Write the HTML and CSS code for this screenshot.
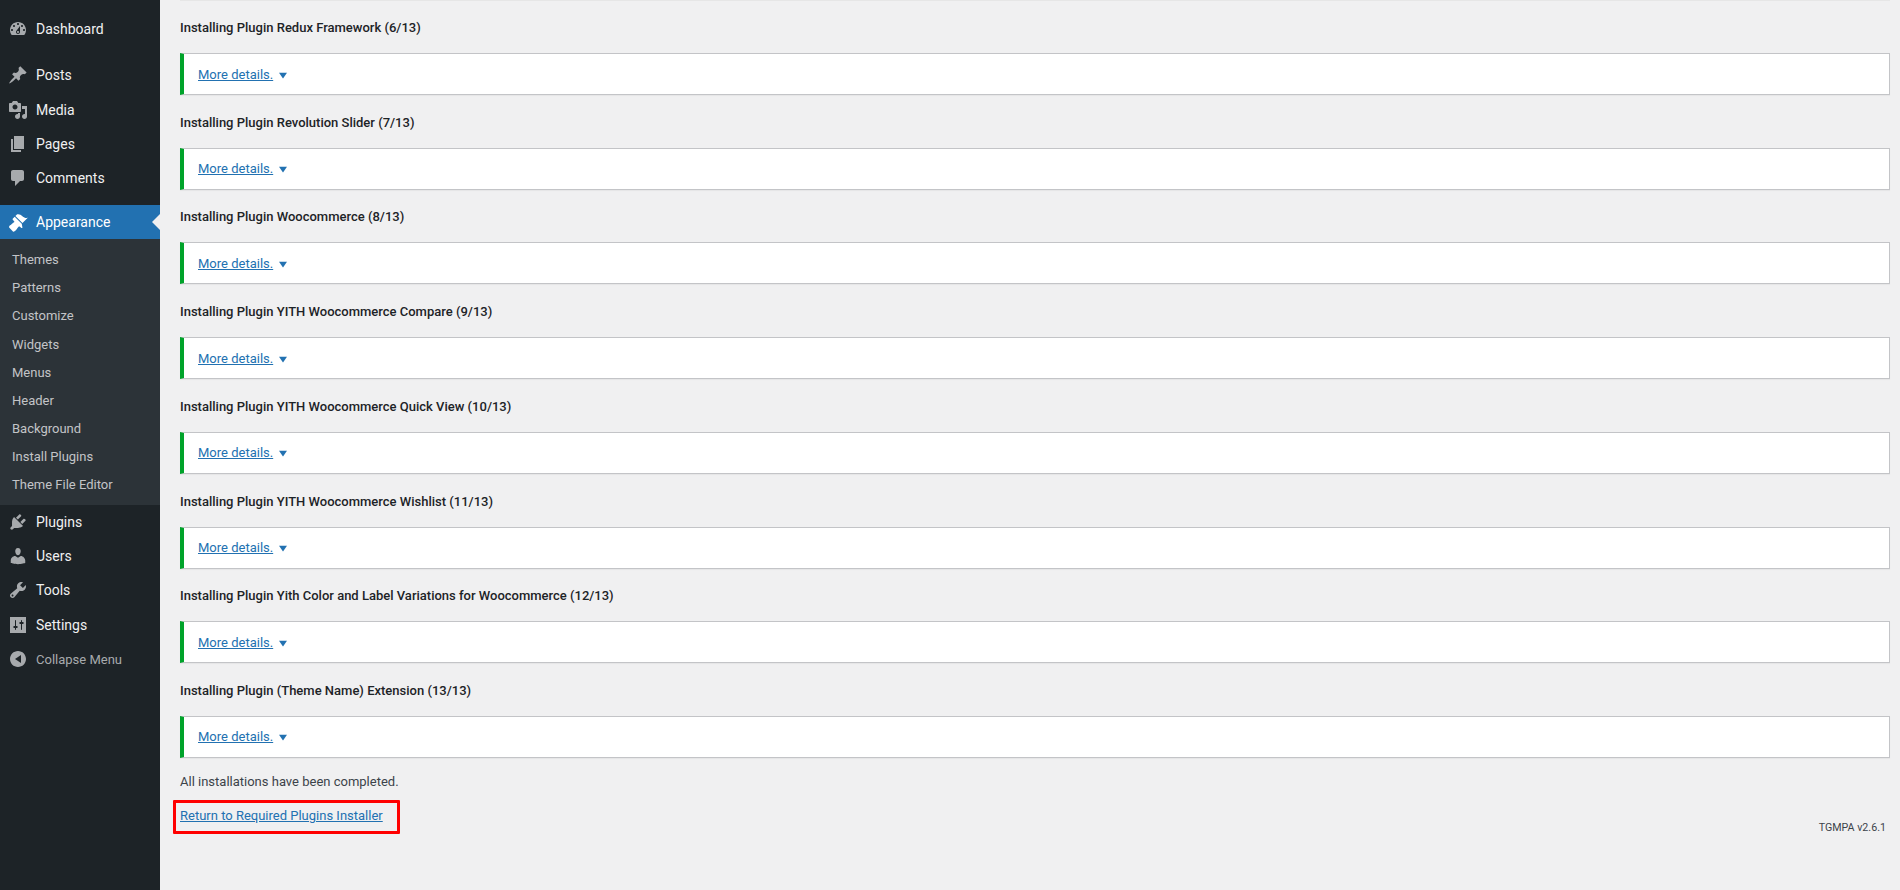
FILE: index.html
```html
<!DOCTYPE html>
<html lang="en">
<head>
<meta charset="utf-8">
<title>Install Plugins</title>
<link rel="stylesheet" href="styles.css">
</head>
<body>
<div class="layout">
  <nav class="sidebar">
    <ul class="menu group-first">
      <li class="item"><svg class="icon" viewBox="0 0 20 20"><path d="M3.76 16h12.48c1.1-1.37 1.76-3.11 1.76-5 0-4.42-3.58-8-8-8s-8 3.58-8 8c0 1.89.66 3.63 1.76 5zM10 4c.55 0 1 .45 1 1s-.45 1-1 1-1-.45-1-1 .45-1 1-1zM6 6c.55 0 1 .45 1 1s-.45 1-1 1-1-.45-1-1 .45-1 1-1zm8 0c.55 0 1 .45 1 1s-.45 1-1 1-1-.45-1-1 .45-1 1-1zm-5.37 5.55L12 7v6c0 1.1-.9 2-2 2s-2-.9-2-2c0-.57.24-1.08.63-1.45zM4 10c.55 0 1 .45 1 1s-.45 1-1 1-1-.45-1-1 .45-1 1-1zm12 0c.55 0 1 .45 1 1s-.45 1-1 1-1-.45-1-1 .45-1 1-1zm-5 3c0-.55-.45-1-1-1s-1 .45-1 1 .45 1 1 1 1-.45 1-1z"/></svg>Dashboard</li>
    </ul>
    <ul class="menu group-content">
      <li class="item"><svg class="icon" viewBox="0 0 20 20"><path d="M10.44 3.02l1.82-1.82 6.36 6.35-1.83 1.82c-1.05-.68-2.48-.57-3.41.36l-.75.75c-.92.93-1.04 2.35-.35 3.41l-1.83 1.82-2.41-2.41-2.8 2.79c-.42.42-3.38 2.71-3.8 2.29s1.86-3.39 2.28-3.81l2.79-2.79L4.1 9.36l1.83-1.82c1.05.69 2.48.57 3.4-.36l.75-.75c.93-.92 1.05-2.35.36-3.41z"/></svg>Posts</li>
      <li class="item"><svg class="icon" viewBox="0 0 20 20"><path d="M13 11V4c0-.55-.45-1-1-1h-1.67L9 1H5L3.67 3H2c-.55 0-1 .45-1 1v7c0 .55.45 1 1 1h10c.55 0 1-.45 1-1zM7 4.5c1.38 0 2.5 1.12 2.5 2.5S8.38 9.5 7 9.5 4.5 8.38 4.5 7 5.62 4.5 7 4.5zM14 6h5v10.5c0 1.38-1.12 2.5-2.5 2.5S14 17.88 14 16.5s1.12-2.5 2.5-2.5c.17 0 .34.02.5.05V9h-3V6zm-4 8.05V13h2v3.5c0 1.38-1.12 2.5-2.5 2.5S7 17.88 7 16.5 8.12 14 9.5 14c.17 0 .34.02.5.05z"/></svg>Media</li>
      <li class="item"><svg class="icon" viewBox="0 0 20 20"><path d="M6 15V2h10v13H6zm-1 1h8v2H3V5h2v11z"/></svg>Pages</li>
      <li class="item"><svg class="icon" viewBox="0 0 20 20"><path d="M5 2h9c1.1 0 2 .9 2 2v7c0 1.1-.9 2-2 2h-2l-5 5v-5H5c-1.1 0-2-.9-2-2V4c0-1.1.9-2 2-2z"/></svg>Comments</li>
    </ul>
    <ul class="menu group-admin">
      <li class="item current"><svg class="icon" viewBox="0 0 20 20"><path d="M14.48 11.06L7.41 3.99l1.5-1.5c.5-.56 2.3-.47 3.51.32 1.21.8 1.43 1.28 2.91 2.1 1.18.64 2.45 1.26 4.45.85zm-.71.71L6.7 4.7 4.93 6.47c-.39.39-.39 1.02 0 1.41l1.06 1.06c.39.39.39 1.03 0 1.42-.6.6-1.43 1.11-2.21 1.69-.35.26-.7.53-1.01.84C1.43 13.23.5 14.95 1.4 15.85l3.53 3.54c.7.7 1.8-.23 3.1-1.47.31-.31.58-.66.84-1.01.58-.78 1.09-1.61 1.69-2.21.39-.39 1.03-.39 1.42 0l1.06 1.06c.39.39 1.02.39 1.41 0z"/></svg>Appearance</li>
      <li>
        <ul class="submenu">
          <li>Themes</li>
          <li>Patterns</li>
          <li>Customize</li>
          <li>Widgets</li>
          <li>Menus</li>
          <li>Header</li>
          <li>Background</li>
          <li>Install Plugins</li>
          <li>Theme File Editor</li>
        </ul>
      </li>
      <li class="item"><svg class="icon" viewBox="0 0 20 20"><path d="M13.11 4.36L9.87 7.6 8 5.73l3.24-3.24c.35-.34 1.05-.2 1.56.32.52.51.66 1.21.31 1.55zm-8 1.77l.91-1.12 9.01 9.01-1.19.84c-.71.71-2.63 1.16-3.82 1.16H6.14L4.9 17.26c-.59.59-1.54.59-2.12 0-.59-.58-.59-1.53 0-2.12l1.24-1.24v-3.88c0-1.13.4-3.19 1.09-3.89zm7.26 3.97l3.24-3.24c.34-.35 1.04-.21 1.55.31.52.51.66 1.21.31 1.55l-3.24 3.25z"/></svg>Plugins</li>
      <li class="item"><svg class="icon" viewBox="0 0 20 20"><path d="M10 9.25c-2.27 0-2.73-3.44-2.73-3.44C7 4.02 7.82 2 9.97 2c2.16 0 2.98 2.02 2.71 3.81 0 0-.41 3.44-2.68 3.44zm0 2.57L12.72 10c2.39 0 4.52 2.33 4.52 4.53v2.49s-3.65 1.13-7.24 1.13c-3.65 0-7.24-1.13-7.24-1.13v-2.49c0-2.25 1.94-4.48 4.47-4.48z"/></svg>Users</li>
      <li class="item"><svg class="icon" viewBox="0 0 20 20"><path d="M16.68 9.77c-1.34 1.34-3.3 1.67-4.95.99l-5.41 6.52c-.99.99-2.59.99-3.58 0s-.99-2.59 0-3.57l6.52-5.42c-.68-1.65-.35-3.61.99-4.95 1.28-1.28 3.12-1.62 4.72-1.06l-2.89 2.89 2.82 2.82 2.86-2.87c.53 1.58.18 3.39-1.08 4.65zM3.81 16.21c.4.39 1.04.39 1.43 0 .4-.4.4-1.04 0-1.43-.39-.4-1.03-.4-1.43 0-.39.39-.39 1.03 0 1.43z"/></svg>Tools</li>
      <li class="item"><svg class="icon" viewBox="0 0 20 20"><path fill-rule="evenodd" d="M2 2h16v16H2zM8 11V5.5c0-.28-.22-.5-.5-.5s-.5.22-.5.5V11H5.5v2H7v1.5c0 .28.22.5.5.5s.5-.22.5-.5V13h1.500v-2zM14 9h1.500V7H14V5.500c0-.28-.22-.5-.5-.5s-.5.22-.5.5V7h-1.500v2H13v5.500c0 .28.22.5.5.5s.5-.22.5-.5z"/></svg>Settings</li>
      <li class="item collapse"><svg class="icon" viewBox="0 0 20 20"><path fill-rule="evenodd" d="M18 10c0-4.420-3.580-8-8-8s-8 3.580-8 8 3.580 8 8 8 8-3.580 8-8zm-5 4l-6-4 6-4v8z"/></svg>Collapse Menu</li>
    </ul>
  </nav>

  <main class="content">
    <div class="sliver"></div>

    <section class="step">
      <h2 class="step-title">Installing Plugin Redux Framework (6/13)</h2>
      <div class="notice"><a class="details" href="#">More details.</a><svg class="caret" viewBox="0 0 20 20"><path d="M15 6l-5 7-5-7h10z"/></svg></div>
    </section>
    <section class="step">
      <h2 class="step-title">Installing Plugin Revolution Slider (7/13)</h2>
      <div class="notice"><a class="details" href="#">More details.</a><svg class="caret" viewBox="0 0 20 20"><path d="M15 6l-5 7-5-7h10z"/></svg></div>
    </section>
    <section class="step">
      <h2 class="step-title">Installing Plugin Woocommerce (8/13)</h2>
      <div class="notice"><a class="details" href="#">More details.</a><svg class="caret" viewBox="0 0 20 20"><path d="M15 6l-5 7-5-7h10z"/></svg></div>
    </section>
    <section class="step">
      <h2 class="step-title">Installing Plugin YITH Woocommerce Compare (9/13)</h2>
      <div class="notice"><a class="details" href="#">More details.</a><svg class="caret" viewBox="0 0 20 20"><path d="M15 6l-5 7-5-7h10z"/></svg></div>
    </section>
    <section class="step">
      <h2 class="step-title">Installing Plugin YITH Woocommerce Quick View (10/13)</h2>
      <div class="notice"><a class="details" href="#">More details.</a><svg class="caret" viewBox="0 0 20 20"><path d="M15 6l-5 7-5-7h10z"/></svg></div>
    </section>
    <section class="step">
      <h2 class="step-title">Installing Plugin YITH Woocommerce Wishlist (11/13)</h2>
      <div class="notice"><a class="details" href="#">More details.</a><svg class="caret" viewBox="0 0 20 20"><path d="M15 6l-5 7-5-7h10z"/></svg></div>
    </section>
    <section class="step">
      <h2 class="step-title">Installing Plugin Yith Color and Label Variations for Woocommerce (12/13)</h2>
      <div class="notice"><a class="details" href="#">More details.</a><svg class="caret" viewBox="0 0 20 20"><path d="M15 6l-5 7-5-7h10z"/></svg></div>
    </section>
    <section class="step">
      <h2 class="step-title">Installing Plugin (Theme Name) Extension (13/13)</h2>
      <div class="notice"><a class="details" href="#">More details.</a><svg class="caret" viewBox="0 0 20 20"><path d="M15 6l-5 7-5-7h10z"/></svg></div>
    </section>

    <p class="done">All installations have been completed.</p>
    <p class="return"><a class="return-link" href="#">Return to Required Plugins Installer</a></p>
    <p class="version">TGMPA v2.6.1</p>
  </main>
</div>
</body>
</html>
```

FILE: styles.css
```css
*, *::before, *::after { box-sizing: border-box; }

html, body {
  margin: 0;
  height: 100%;
  overflow: hidden;
}

body {
  background: #f0f0f1;
  color: #3c434a;
  font-family: Roboto, "Noto Sans", sans-serif;
  font-size: 13px;
}

ul { list-style: none; margin: 0; padding: 0; }

.layout {
  display: flex;
  height: 890px;
}

.sidebar {
  flex: 0 0 160px;
  background: #1d2327;
  color: #f0f0f1;
  font-size: 14px;
  padding-top: 12px;
}

.group-first { margin-bottom: 12px; }
.group-content { margin-bottom: 9.5px; }

.item {
  position: relative;
  display: flex;
  align-items: center;
  gap: 8px;
  height: 34.3px;
  padding-left: 8px;
}

.icon {
  flex: 0 0 20px;
  width: 20px;
  height: 20px;
  fill: #a7aaad;
}

.current {
  background: #2271b1;
  color: #fff;
  height: 34px;
}

.current .icon { fill: #fff; }

.current::after {
  content: "";
  position: absolute;
  right: 0;
  top: 50%;
  margin-top: -8px;
  border: 8px solid transparent;
  border-right-color: #f0f0f1;
  border-left-width: 0;
}

.submenu {
  background: #2c3338;
  color: #c3c4c7;
  font-size: 13px;
  padding: 7px 0 5px;
}

.submenu li {
  padding-left: 12px;
  height: 28.2px;
  line-height: 28.2px;
}

.collapse { color: #a7aaad; font-size: 13px; }

.content {
  flex: 1;
  min-width: 0;
  padding: 0 10px 0 20px;
}

.sliver {
  height: 1px;
  background: #e6e6e6;
  margin-bottom: 17px;
}

.step { margin-bottom: 17.71px; }

.step-title {
  margin: 0 0 16px;
  padding-top: 1px;
  color: #1d2327;
  font-size: 13px;
  font-weight: 500;
  line-height: 18px;
}

.notice {
  display: flex;
  align-items: center;
  height: 42px;
  padding-left: 14px;
  background: #fff;
  border: 1px solid #c3c4c7;
  border-left: 4px solid #00a32a;
  box-shadow: 0 1px 1px rgba(0, 0, 0, 0.04);
}

.details { color: #2271b1; }

.caret {
  width: 16px;
  height: 16px;
  margin: 3px 0 0 2px;
  fill: #2271b1;
}

.done {
  margin: -4px 0 0;
  line-height: 20px;
}

.return {
  position: relative;
  margin: 14px 0 0;
  line-height: 20px;
}

.return-link { color: #2271b1; }

.return-link::after {
  content: "";
  position: absolute;
  left: -7px;
  top: -6px;
  width: 227px;
  height: 34px;
  border: 3px solid #f00;
  border-radius: 1px;
}

.version {
  margin: -6px 4px 0 0;
  text-align: right;
  font-size: 10.7px;
  line-height: 16px;
}
```
